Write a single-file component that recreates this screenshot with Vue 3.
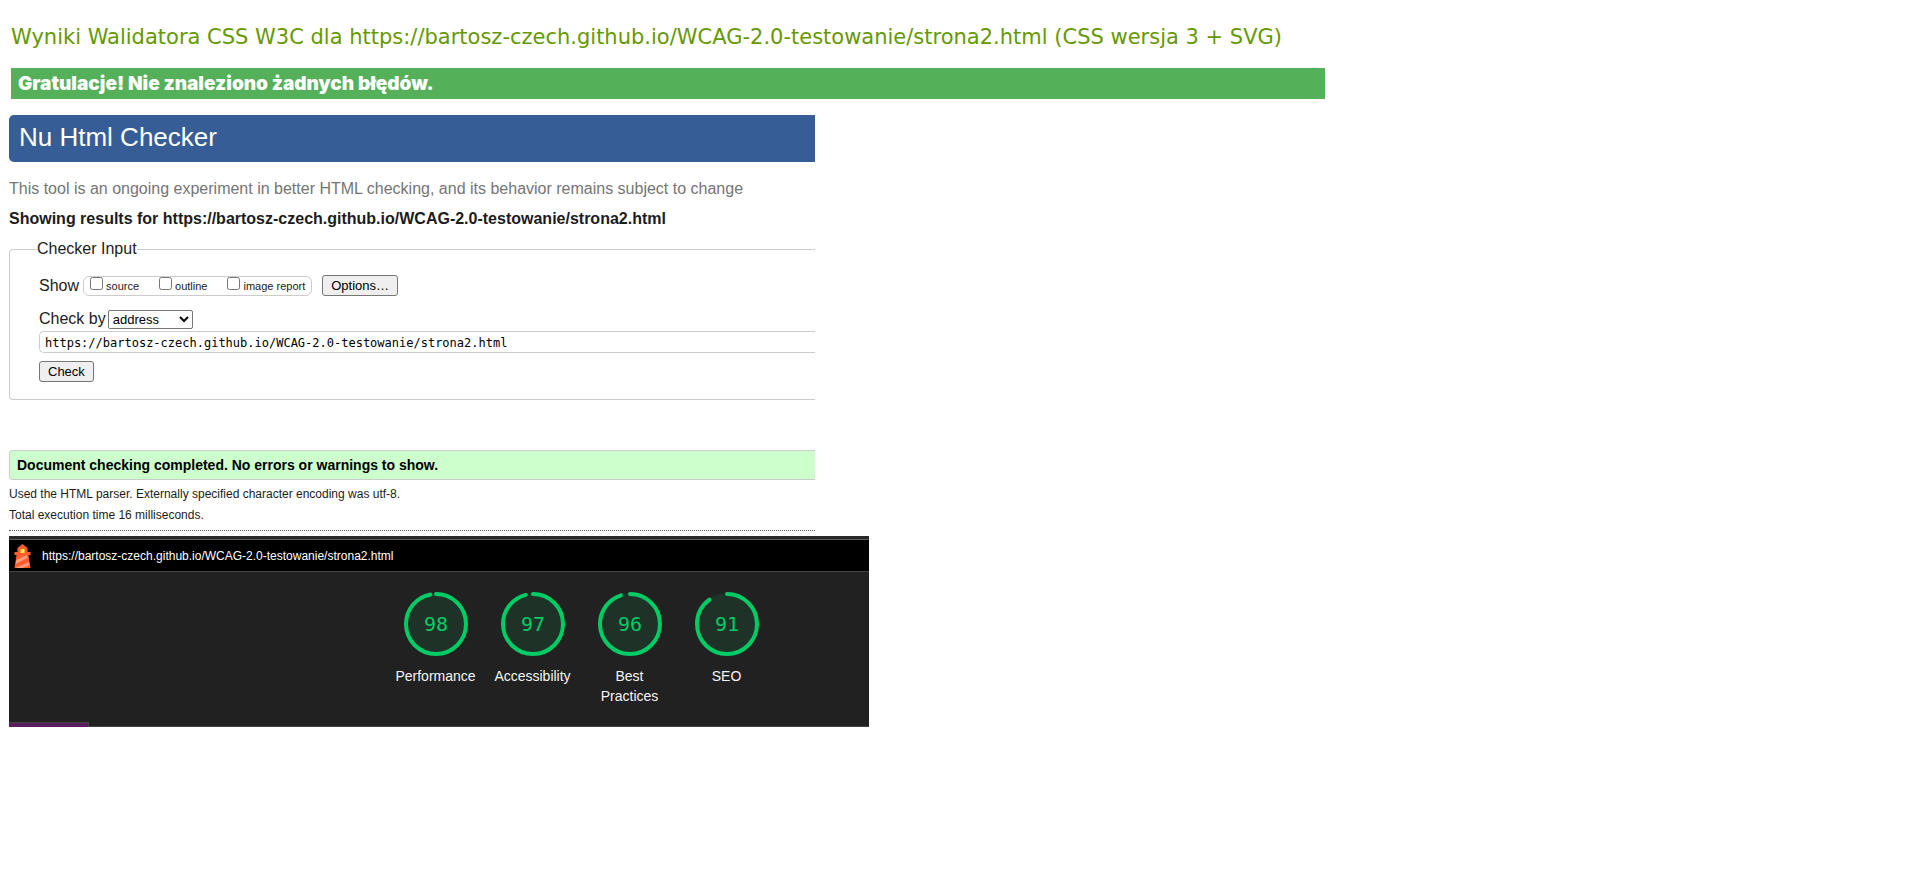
<script setup>
import { ref } from 'vue'

const pageUrl = 'https://bartosz-czech.github.io/WCAG-2.0-testowanie/strona2.html'
const address = ref(pageUrl)
const mode = ref('address')
const shown = ref([])
const options = ['source', 'outline', 'image report']
const circumference = 2 * Math.PI * 30
const gauges = [
  { label: 'Performance', score: 98 },
  { label: 'Accessibility', score: 97 },
  { label: 'Best Practices', score: 96 },
  { label: 'SEO', score: 91 }
]
const dash = (score) => `${(circumference * score) / 100 - 2} ${circumference}`
</script>

<template>
  <main class="page">
    <section class="css-result">
      <h1>Wyniki Walidatora CSS W3C dla {{ pageUrl }} (CSS wersja 3 + SVG)</h1>
      <p class="congrats">Gratulacje! Nie znaleziono żadnych błędów.</p>
    </section>

    <section class="checker">
      <h2 class="banner">Nu Html Checker</h2>
      <p class="note">This tool is an ongoing experiment in better HTML checking, and its behavior remains subject to change</p>
      <h3>Showing results for {{ pageUrl }}</h3>
      <form class="form" @submit.prevent>
        <fieldset class="inputs">
          <legend>Checker Input</legend>
          <div class="row show">
            <span class="lead">Show</span>
            <span class="checks">
              <label v-for="o in options" :key="o"><input v-model="shown" type="checkbox" :value="o" /><span>{{ o }}</span></label>
            </span>
            <button type="button">Options…</button>
          </div>
          <div class="row by">
            <label class="lead" for="mode">Check by</label>
            <select id="mode" v-model="mode">
              <option>address</option>
              <option>file upload</option>
              <option>text input</option>
            </select>
          </div>
          <input v-model="address" class="address" type="text" aria-label="Address" />
          <button class="submit" type="submit">Check</button>
        </fieldset>
      </form>
      <p class="success">Document checking completed. No errors or warnings to show.</p>
      <p class="detail">Used the HTML parser. Externally specified character encoding was utf-8.</p>
      <p class="detail">Total execution time 16 milliseconds.</p>
      <hr />
    </section>

    <section class="report">
      <header class="topbar">
        <svg class="lighthouse" viewBox="0 0 16 24" aria-hidden="true">
          <path d="M8 0 13 4V8H16V11H14L16 24H0L2 11H0V8H3V4Z" fill="#ff5c2b" />
          <path d="M6 5H10V9H6Z" fill="#ffeb3b" />
          <path d="M2 16 12 11 13 14 1 20ZM1 24 14 18 15 21 8 24Z" fill="#ff9a78" />
        </svg>
        <span>{{ pageUrl }}</span>
      </header>
      <div class="gauges">
        <div v-for="g in gauges" :key="g.label" class="gauge">
          <svg viewBox="0 0 64 64" aria-hidden="true">
            <circle cx="32" cy="32" r="31" fill="#1e3228" />
            <circle cx="32" cy="32" r="30" class="arc" :stroke-dasharray="dash(g.score)" />
            <text x="32" y="39">{{ g.score }}</text>
          </svg>
          <span class="label">{{ g.label }}</span>
        </div>
      </div>
      <div class="footer"><div class="status"></div></div>
    </section>
  </main>
</template>

<style>
body { margin: 0; background: #fff; }
</style>

<style scoped>
* { box-sizing: border-box; }
.page { padding: 23px 9px 0; font-family: "Liberation Sans", Arial, sans-serif; color: #1c1c1c; }
h1, h2, h3, p { margin: 0; }
.css-result { max-width: 1316px; padding-left: 2px; }
h1 { font: 400 21px/28px "DejaVu Sans", Verdana, sans-serif; color: #690; white-space: nowrap; }
.congrats { margin-top: 17px; padding: 0 7px; background: #55b05a; color: #fff; font: 900 19px/31px Inter, "Arial Black", sans-serif; }
.checker { max-width: 806px; margin-top: 16px; }
.banner { padding: 0 10px 3px; background: #365d95; border-radius: 5px 0 0 5px; color: #fff; font-size: 26px; font-weight: 400; line-height: 44px; }
.note { margin-top: 17px; font-size: 16px; line-height: 20px; color: #757575; }
h3 { margin-top: 10px; font-size: 16px; line-height: 20px; }
.inputs { min-width: 0; margin: 10px 0 0; padding: 16px 0 17px 29px; border: 1px solid #ccc; border-right: 0; border-radius: 4px 0 0 4px; }
legend { margin-left: -2px; padding: 0; font-size: 16px; line-height: 20px; }
.row { display: flex; align-items: center; }
.lead { font-size: 16px; line-height: 20px; }
.show { height: 21px; }
.checks { display: flex; gap: 20px; height: 20px; margin: 0 10px 0 4px; padding: 0 6px; border: 1px solid #ccc; border-radius: 6px; }
.checks label { display: flex; gap: 3px; font-size: 11px; line-height: 19px; }
.checks input { width: 13px; height: 13px; margin: 0; }
.by { gap: 2px; height: 20px; margin-top: 13px; }
select { width: 85px; height: 19px; padding: 0; border: 1px solid #767676; border-radius: 2px; background-color: #fff; color: #000; font: 13px "Liberation Sans", Arial, sans-serif; }
button { height: 21px; padding: 0 8px; border: 1px solid #767676; border-radius: 3px; background: #efefef; color: #000; font: 13px/17px "Liberation Sans", Arial, sans-serif; }
.address { display: block; width: 100%; height: 22px; margin: 2px 0 8px; padding: 1px 5px 0; border: 1px solid #ccc; border-right: 0; border-radius: 5px 0 0 5px; color: #000; font: 12px "DejaVu Sans Mono", Consolas, monospace; }
.submit { display: block; }
.success { margin: 50px 0 4px; padding: 0 7px; border: 1px solid #ccc; border-right: 0; border-radius: 4px 0 0 4px; background: #cfc; color: #000; font-size: 14px; font-weight: 700; line-height: 28px; }
.detail { font-size: 12px; line-height: 21px; }
hr { height: 0; margin: 4px 0 5px; border: 0; border-top: 1px dotted #555; }
.report { max-width: 860px; background: #212121; border-top: 3px solid #292929; }
.topbar { display: flex; align-items: center; gap: 11px; height: 33px; padding-left: 5px; background: #000; border-top: 1px solid #5c5c5c; border-bottom: 1px solid #444; color: #fff; font-size: 12px; }
.lighthouse { width: 17px; height: 24px; }
.gauges { display: grid; grid-template-columns: repeat(4, 97px); padding: 20px 0 16px 378px; }
.gauge { display: flex; flex-direction: column; align-items: center; gap: 10px; }
.gauge svg { width: 64px; height: 64px; }
.arc { fill: none; stroke: #0c6; stroke-width: 4; stroke-linecap: round; transform: rotate(-90deg); transform-origin: 32px 32px; }
.gauge text { fill: #0c6; font: 20px "DejaVu Sans Mono", monospace; text-anchor: middle; }
.label { max-width: 84px; color: #f5f5f5; font-size: 14px; line-height: 20px; text-align: center; }
.footer { display: flex; align-items: flex-end; height: 5px; border-bottom: 1px solid #444; }
.status { width: 80px; height: 5px; margin-bottom: -1px; background: #581c5f; border-top: 1px solid #444; border-right: 1px solid #444; }
</style>
